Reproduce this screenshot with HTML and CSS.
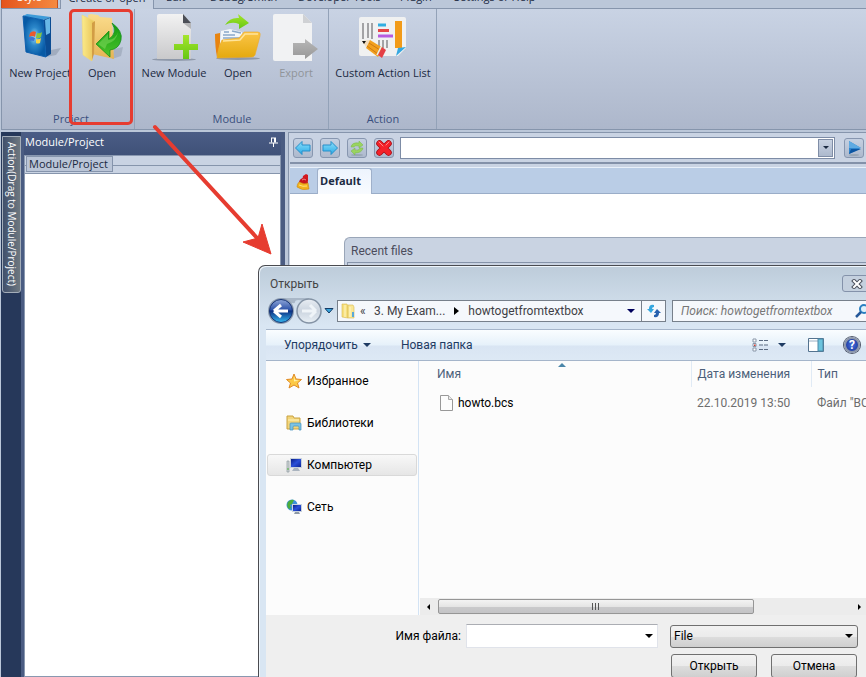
FILE: index.html
```html
<!DOCTYPE html>
<html lang="en">
<head>
<meta charset="utf-8">
<title>Module/Project</title>
<link rel="stylesheet" href="styles.css">
</head>
<body>
<svg class="defs" aria-hidden="true">
  <defs>
    <radialGradient id="boxBlue"><stop offset="0" stop-color="#9bdcf8"/><stop offset=".45" stop-color="#2b87ca"/><stop offset="1" stop-color="#075aa5"/></radialGradient>
    <linearGradient id="flap"><stop offset="0" stop-color="#fbeb8b"/><stop offset="1" stop-color="#e9c458"/></linearGradient>
    <linearGradient id="folderBack" x2="0" y2="1"><stop offset="0" stop-color="#fbdc8c"/><stop offset="1" stop-color="#e5b455"/></linearGradient>
    <linearGradient id="green" x2="0" y2="1"><stop offset="0" stop-color="#129a10"/><stop offset="1" stop-color="#4cc42c"/></linearGradient>
    <linearGradient id="lime" x2="0" y2="1"><stop offset="0" stop-color="#a6e52c"/><stop offset="1" stop-color="#65c713"/></linearGradient>
    <linearGradient id="page" x2="0" y2="1"><stop offset="0" stop-color="#f2f2f2"/><stop offset="1" stop-color="#c9c9cb"/></linearGradient>
    <linearGradient id="amber" x2="0" y2="1"><stop offset="0" stop-color="#fbc548"/><stop offset="1" stop-color="#e4a90e"/></linearGradient>
    <linearGradient id="grayArrow" x2="0" y2="1"><stop offset="0" stop-color="#b8b8b8"/><stop offset="1" stop-color="#979797"/></linearGradient>
    <linearGradient id="sky" x2="0" y2="1"><stop offset="0" stop-color="#8de0fb"/><stop offset="1" stop-color="#28a9e6"/></linearGradient>
    <linearGradient id="orb" x2="0" y2="1"><stop offset="0" stop-color="#8fa6d8"/><stop offset=".45" stop-color="#2c52a8"/><stop offset=".5" stop-color="#0b2f82"/><stop offset="1" stop-color="#36b8f0"/></linearGradient>
    <linearGradient id="orbOff" x2="0" y2="1"><stop offset="0" stop-color="#e8edf3"/><stop offset=".5" stop-color="#cbd4df"/><stop offset="1" stop-color="#e9f0f6"/></linearGradient>
    <linearGradient id="screen" x2="1" y2="1"><stop offset="0" stop-color="#0a1d86"/><stop offset=".5" stop-color="#2a50d8"/><stop offset="1" stop-color="#0c2496"/></linearGradient>
  </defs>
</svg>

<nav class="tabs">
  <a class="tab tab-style" href="#">Style</a>
  <a class="tab tab-active" href="#">Create or open</a>
  <a class="tab tab-edit" href="#">Edit</a>
  <a class="tab tab-debug" href="#">Debug/Smith</a>
  <a class="tab tab-dev" href="#">Developer Tools</a>
  <a class="tab tab-plugin" href="#">Plugin</a>
  <a class="tab tab-settings" href="#">Settings or Help</a>
</nav>

<header class="ribbon">
  <section class="group">
    <div class="tools">
      <button class="tool">
        <svg class="icon" viewBox="0 0 48 48"><path d="M30 44l10-2 5-7-10 2z" fill="#8d99ab" opacity=".6"/><path d="M7 3l4-2 24 3-8 3z" fill="#3e9bd8"/><path d="M27 7l8-3v37l-5 3z" fill="#0b4c93"/><path d="M29 7l5-2v15l-4 2z" fill="#68b7e6"/><path d="M7 3l20 4 3 37-20-5z" fill="url(#boxBlue)" stroke="#0e5fae"/><path d="M14 20q3-3 6-1l-1 5q-3-2-6 0z" fill="#ea5a2d"/><path d="M21 20q3 1 5-1l-1 5q-2 2-5 1z" fill="#86c540"/><path d="M13 25q3-2 6 0l-1 3q-3-1-5 0z" fill="#3f74d2"/><path d="M20 26q3 1 5-1l-1 5q-2 1-4 0z" fill="#f7d447"/></svg>
        <span>New Project</span>
      </button>
      <button class="tool">
        <svg class="icon" viewBox="0 0 48 48"><path d="M34 46l9-3 2-9-9 2z" fill="#8d99ab" opacity=".5"/><path d="M10 2l3-1 7 1 2 2 12 1 2 41-22-5z" fill="url(#folderBack)"/><path d="M4 2l12 6-2 40-9-6z" fill="url(#flap)" stroke="#f3d874" stroke-width=".6"/><path d="M14 10l3-2-1 33-2 6z" fill="#d29d45"/><path d="M18 31l13-13v8q9-6 3-16 11 8 9 17-2 9-11 10v7z" fill="url(#green)" stroke="#0c8a13" stroke-width=".7"/><path d="M20 31l10-10v6q8-1 10-8-1 9-11 12l-2 5z" fill="#86dc62" opacity=".5"/></svg>
        <span>Open</span>
      </button>
    </div>
    <h2>Project</h2>
  </section>
  <section class="group">
    <div class="tools">
      <button class="tool tool-wide">
        <svg class="icon" viewBox="0 0 48 48"><ellipse cx="24" cy="46.500" rx="22" ry="1.500" fill="#8e98a9"/><path d="M7 3q0-2 2-2h24l8 9v36H7z" fill="url(#page)"/><path d="M33 1l8 9h-8z" fill="#4b4e56"/><path d="M33 10h8v6z" fill="#b4b4b6"/><path d="M33 22h6v9h9v6h-9v9h-6v-9h-9v-6h9z" fill="url(#lime)"/></svg>
        <span>New Module</span>
      </button>
      <button class="tool tool-narrow">
        <svg class="icon" viewBox="0 0 48 48"><ellipse cx="24" cy="45.500" rx="22" ry="1.500" fill="#8e98a9"/><path d="M1 21l5-1v22l-3 2q-2-10-2-23z" fill="#e8840f"/><path d="M7 18l9-2 12 3 4 22H5z" fill="#f3f6fa"/><path d="M10 19h5M9 22h12M9 25h18M18 18l9 2" stroke="#8aa8ca" stroke-width="1.500"/><path d="M3 45q1-11 5-18l17-2 5-6h14q3 0 2 4l-5 19q-1 2-3 2z" fill="url(#amber)" stroke="#eca82a" stroke-width=".6"/><path d="M9 28l17-1 5-6h13" fill="none" stroke="#ffe49b" stroke-width="1.500"/><path d="M11 12Q16 4 25 5l-1-4 11 9-10 6v-5q-7-3-14 1z" fill="url(#lime)"/></svg>
        <span>Open</span>
      </button>
      <button class="tool tool-narrow" disabled>
        <svg class="icon" viewBox="0 0 48 48"><path d="M1 3q0-2 2-2h28l9 9v38H3q-2 0-2-2z" fill="#f1f2f3"/><path d="M31 1l9 9h-9z" fill="#cfd1d4"/><path d="M21 30h12v-4l13 10-13 10v-4H21z" fill="url(#grayArrow)"/></svg>
        <span>Export</span>
      </button>
    </div>
    <h2>Module</h2>
  </section>
  <section class="group">
    <div class="tools">
      <button class="tool tool-list">
        <svg class="icon" viewBox="0 0 48 48"><rect y="4" width="47" height="39" rx="2" fill="#f0f1f1"/><path d="M4 10v16M9 10v15M13 10v16M20 27v8M24 27v8M28 27v8" stroke="#a3a3a5" stroke-width="2"/><path d="M19 12h8" stroke="#32aee0" stroke-width="3"/><path d="M19 17.500h11" stroke="#e54545" stroke-width="3"/><path d="M19 23h15" stroke="#b65be0" stroke-width="3"/><path d="M36 8h7v27h-7z" fill="#f29b18"/><path d="M37 43l2-8 8-1z" fill="#35a8e1"/><path d="M39 43l8-8v8z" fill="#bec9da"/><path d="M3 28l8-1-4 7z" fill="#f3dcbb"/><path d="M3 28h4l-2 3z" fill="#111"/><path d="M11 27l13 8-5 9-12-9z" fill="#f2a01e"/><path d="M10 30l11 7M8 33l11 8" stroke="#ce7a15"/><path d="M23 34l4 3-4 8-4-3z" fill="#e43f46"/><path d="M22 34l-4 8" stroke="#e9edf0" stroke-width="1.500"/></svg>
        <span>Custom Action List</span>
      </button>
    </div>
    <h2>Action</h2>
  </section>
</header>

<main class="workspace">
  <aside class="rail"><button class="rail-tab">Action(Drag to Module/Project)</button></aside>
  <section class="panel">
    <h1 class="panel-title"><span>Module/Project</span>
      <svg class="pin" viewBox="0 0 9 10"><path d="M2 1h5M2.500 1v4.500M6.500 1v4.500M5.500 1v4.500M0 6h9M4.500 6v4" stroke="#fff" fill="none"/></svg>
    </h1>
    <div class="panel-body">
      <div class="panel-tabs"><button class="panel-tab">Module/Project</button></div>
      <div class="tree"></div>
    </div>
  </section>
  <section class="browser">
    <div class="navbar">
      <button class="square" aria-label="Back"><svg viewBox="0 0 18 18"><path d="M1.500 9L8 2.500V6h8v6H8v3.500z" fill="url(#sky)" stroke="#278fca"/></svg></button>
      <button class="square" aria-label="Forward"><svg viewBox="0 0 18 18"><path d="M16.500 9L10 2.500V6H2v6h8v3.500z" fill="url(#sky)" stroke="#278fca"/></svg></button>
      <button class="square" aria-label="Refresh"><svg viewBox="0 0 18 18"><ellipse cx="9" cy="16" rx="6" ry="1" fill="#98a6b5"/><path d="M3 8q1-5 8-4V2l4 4-4 3V7q-4-1-5 1zM15 9q-1 5-8 5v2l-4-4 4-3v2q4 1 5-2z" fill="#9ad45f" stroke="#74b64a" stroke-width=".5"/></svg></button>
      <button class="square" aria-label="Stop"><svg viewBox="0 0 18 18"><path d="M4.500 4.500l9 9m0-9l-9 9" stroke="#a80c14" stroke-width="6.500" stroke-linecap="round"/><path d="M4.500 4.500l9 9m0-9l-9 9" stroke="#f5222a" stroke-width="5" stroke-linecap="round"/><path d="M4 3l4 4M14 3l-3 3" stroke="#ff8a8a" stroke-linecap="round"/></svg></button>
      <div class="combo"><input aria-label="Address"><button class="combo-arrow" aria-label="Show addresses"><i class="caret"></i></button></div>
      <button class="square" aria-label="Go"><svg viewBox="0 0 18 18"><ellipse cx="9" cy="16" rx="5" ry="1" fill="#98a6b5"/><path d="M4 2l12 7-12 6z" fill="#2e86cf"/><path d="M4 2l12 7H4z" fill="#5eaae2"/><path d="M6 10h10l-12 5z" fill="#0c55a2"/></svg></button>
    </div>
    <div class="doc-tabs">
      <button class="broom" aria-label="Clear"><svg viewBox="0 0 14 16"><path d="M7 2l3-2 2 1v6H6z" fill="#d3181f"/><path d="M3 8q1-4 5-4 4 0 4 5l-3 2z" fill="#c8141c"/><path d="M6 6q2-2 4 0" stroke="#f58080" fill="none"/><path d="M3 8q5 3 9 1l1 6q-7 2-12-2 0-3 2-5z" fill="#f3b21c" stroke="#c9860f" stroke-width=".6"/><path d="M3 11q4 2 8 1" stroke="#ffe279" fill="none"/></svg></button>
      <button class="doc-tab">Default</button>
    </div>
    <div class="page"><section class="recent"><h2>Recent files</h2><div class="recent-list"></div></section></div>
  </section>
</main>

<div class="highlight"></div>
<svg class="arrow" viewBox="0 0 122 134" aria-hidden="true"><path d="M5 4l103 112" stroke="#e63c30" stroke-width="4" stroke-linecap="round"/><path d="M121 131l-28-12 15-4 4-14z" fill="#e63c30" stroke="#e63c30"/></svg>

<section class="dialog" role="dialog" aria-label="Открыть">
  <div class="titlebar"><h2>Открыть</h2>
    <button class="close" aria-label="Закрыть"><svg viewBox="0 0 12 10"><path d="M3 2l6 6m0-6L3 8" stroke="#4b505c" stroke-width="4" stroke-linecap="square"/><path d="M3 2l6 6m0-6L3 8" stroke="#fff" stroke-width="2" stroke-linecap="square"/></svg></button>
  </div>
  <div class="pathbar">
    <svg class="orbs" viewBox="0 0 56 28"><path d="M14 1h28v4q-14-4-14 0t-14-4z" fill="#a9b7c7"/><circle cx="14" cy="14" r="13" fill="#8d9cb0"/><circle cx="14" cy="14" r="11.500" fill="url(#orb)" stroke="#173474"/><path d="M7 14l7-6m-7 6l7 6M8 14h13" stroke="#fff" stroke-width="3"/><circle cx="42" cy="14" r="12" fill="url(#orbOff)" stroke="#8493a5" stroke-width="1.500"/><path d="M49 14l-6-6m6 6l-6 6m5-6H35" stroke="#eff4f8" stroke-width="3"/></svg>
    <button class="history" aria-label="Последние"><svg viewBox="0 0 10 6"><path d="M1 .5h8L5 5z" fill="#35a3dc" stroke="#163c68"/></svg></button>
    <div class="address">
      <svg class="folder" viewBox="0 0 14 16"><path d="M1 1h5l1 2v12l-6-1z" fill="#f6df7c" stroke="#d8b94e" stroke-width=".6"/><path d="M7 2h5l1 2v11H7z" fill="#f9e795" stroke="#d8b94e" stroke-width=".6"/><path d="M4 2v12M9 4v10" stroke="#fff7c9"/><path d="M12 9v5" stroke="#58a8d8" stroke-width="2"/></svg>
      <button class="crumb crumb-up">«</button><button class="crumb">3. My Exam...</button>
      <svg class="sep" viewBox="0 0 5 8"><path d="M0 0l5 4-5 4z"/></svg>
      <button class="crumb crumb-last">howtogetfromtextbox</button>
      <i class="caret caret-navy"></i>
      <button class="reload" aria-label="Обновить"><svg viewBox="0 0 14 14"><path d="M7 1Q2 0 2 5H0l4 4 3-4H5Q5 3 7 3z" fill="#35a7df"/><path d="M7 13q5 1 5-4h2l-4-4-3 4h2q0 2-2 2z" fill="#2660ae"/></svg></button>
    </div>
    <div class="search"><input aria-label="Поиск" placeholder="Поиск: howtogetfromtextbox"><svg viewBox="0 0 14 14"><circle cx="9" cy="5" r="4" fill="#dff1fb" stroke="#2a7fc1" stroke-width="2"/><path d="M6 8l-5 5" stroke="#26599a" stroke-width="2.500"/></svg></div>
  </div>
  <div class="commands">
    <button class="command">Упорядочить <i class="caret"></i></button>
    <button class="command">Новая папка</button>
    <span class="spacer"></span>
    <button class="view" aria-label="Вид"><svg viewBox="0 0 16 14"><path d="M1 1h3v3H1zM1 5.500h3v3H1zM1 10h3v3H1z" fill="#fff" stroke="#8896a8"/><path d="M7 2.500h4m1 0h4M7 7h4m1 0h4M7 11.500h4m1 0h4" stroke="#5b6a81"/><path d="M2 6.500h1.500v1.500H2z" fill="#d83d32"/></svg><i class="caret"></i></button>
    <button class="preview" aria-label="Область просмотра"><svg viewBox="0 0 16 14"><path d="M.5.500h15v13H.5z" fill="#fff" stroke="#54738f"/><path d="M1 3h14" stroke="#9ab0c4"/><path d="M10 1h5v12h-5z" fill="#6bc3dd" stroke="#4d8aa8"/></svg></button>
    <button class="help" aria-label="Справка">?</button>
  </div>
  <div class="explorer">
    <nav class="places">
      <a href="#"><svg viewBox="0 0 16 16"><path d="M8 1l2 5 5.500.5-4 3.500L13 15l-5-3-5 3 1.500-5-4-3.500L6 6z" fill="#fcc945" stroke="#e08a25"/><path d="M8 3l1 4 4 .5-5 1z" fill="#fff0a8"/></svg>Избранное</a>
      <a href="#"><svg viewBox="0 0 16 16"><path d="M1 3V1h6l1 2h6v11H1z" fill="#f2d57a" stroke="#c9a241"/><path d="M2 5h11" stroke="#fff3bd"/><path d="M4 14V9q0-1 1-1h9q1 0 1 1v6h-2v-3q0-1-1-1H8q-1 0-1 1v3H4z" fill="#7cc3e4" stroke="#4290bd" stroke-width=".7"/></svg>Библиотеки</a>
      <a href="#" class="current"><svg viewBox="0 0 16 16"><path d="M1 4h2v11H1z" fill="#cfd6d8" stroke="#8d989f" stroke-width=".7"/><path d="M1.500 11h1v2h-1z" fill="#4fb63f"/><path d="M4 1h12v10H4z" fill="#c9d2dc"/><path d="M5 2h10v8H5z" fill="url(#screen)"/><path d="M8 11h4l2 3H6z" fill="#aab4bf"/></svg>Компьютер</a>
      <a href="#"><svg viewBox="0 0 16 16"><circle cx="6" cy="6" r="5.500" fill="#3b91d8"/><path d="M2 3q3-3 6-2L6 5 4 6l1 3-2 1Q0 7 2 3z" fill="#4cad3a"/><path d="M6 5h10v8H6z" fill="#c9d2dc"/><path d="M7 6h8v6H7z" fill="url(#screen)"/><path d="M9 13h4l1 2H8z" fill="#8d99a6"/></svg>Сеть</a>
    </nav>
    <div class="files">
      <table>
        <colgroup><col class="c-name"><col class="c-date"><col></colgroup>
        <thead><tr><th>Имя<svg class="sort" viewBox="0 0 8 4"><path d="M0 4l4-4 4 4z" fill="#4b86a9"/></svg></th><th>Дата изменения</th><th>Тип</th></tr></thead>
        <tbody><tr><td><svg class="doc" viewBox="0 0 13 16"><path d="M.5.500h8l4 4v11H.5z" fill="#fcfcfc" stroke="#989898"/><path d="M8.500.500v4h4" fill="#e9e9e9" stroke="#a8a8a8"/></svg>howto.bcs</td><td>22.10.2019 13:50</td><td>Файл "BCS"</td></tr></tbody>
      </table>
      <div class="scroll"><svg viewBox="0 0 5 8"><path d="M4 1L1 4l3 3z"/></svg><div class="thumb"><i></i><i></i><i></i></div><svg class="scroll-right" viewBox="0 0 5 8"><path d="M1 1l3 3-3 3z"/></svg></div>
    </div>
  </div>
  <form class="footer">
    <label for="name">Имя файла:</label>
    <div class="name-box"><input id="name"><i class="caret caret-big"></i></div>
    <div class="type-box"><select aria-label="Тип файла"><option>File</option></select><i class="caret caret-big"></i></div>
    <div class="actions"><button type="button">Открыть</button><button type="button">Отмена</button></div>
  </form>
</section>
</body>
</html>
```
FILE: styles.css
```css
* { box-sizing: border-box; }

body {
  margin: 0;
  height: 100vh;
  overflow: hidden;
  display: flex;
  flex-direction: column;
  position: relative;
  padding-left: 1px;
  background: #bbc7d9;
  color: #1b2a42;
  font: 11px/16px "Open Sans", "Noto Sans", sans-serif;
}

button, input, select { font: inherit; color: inherit; margin: 0; padding: 0; border: 0; background: none; border-radius: 0; }
input { min-width: 0; outline: 0; }
h1, h2 { margin: 0; font: inherit; }
a { color: inherit; text-decoration: none; }
svg { display: block; flex: none; }
.defs { position: absolute; width: 0; height: 0; }

.caret { width: 0; height: 0; border: 4px solid transparent; border-top-color: currentColor; border-bottom: 0; flex: none; }
.caret-navy { color: #00005c; }
.caret-big { color: #000; }

/* Menu tabs */
.tabs { display: flex; align-items: flex-end; height: 9px; flex: none; gap: 24px; border-bottom: 1px solid #8695ac; }
.tab { display: flex; align-items: flex-end; height: 24px; flex: none; padding-bottom: 3px; white-space: nowrap; }
.tab-style { width: 57px; margin-right: -24px; justify-content: center; color: #fff; background: linear-gradient(90deg, #e4541c, #f58a41); border: solid #c44f1e; border-width: 0 1px; }
.tab-active { width: 94px; justify-content: center; margin: 0 -12px -1px 2px; border: solid #8695ac; border-width: 0 1px; background: #c8d2e2; }
.tab-edit { width: 20px; }
.tab-debug { width: 64px; }
.tab-dev { width: 78px; }
.tab-plugin { width: 30px; }

/* Ribbon */
.ribbon { display: flex; height: 121px; flex: none; background: linear-gradient(#c9d3e4, #adb7cb); border: solid #8695ac; border-width: 0 0 1px 1px; }
.group { display: flex; flex-direction: column; justify-content: space-between; align-items: center; padding: 4px 3px 2px 4px; border-right: 1px solid #93a2b8; }
.group:first-child { padding-left: 7px; padding-right: 1px; }
.group h2 { color: #3a4f7d; }
.tools { display: flex; }
.tool { display: flex; flex-direction: column; align-items: center; gap: 4px; width: 62px; white-space: nowrap; }
.tool:disabled { color: #909499; }
.tool-wide { width: 70px; }
.tool-narrow { width: 58px; }
.tool-list { width: 100px; }
.icon { width: 48px; height: 48px; }

/* Workspace */
.workspace { display: flex; flex: 1; min-height: 0; padding-top: 2px; }
.rail { width: 20px; flex: none; padding: 4px 0 0 1px; background: #26385a; }
.rail-tab { width: 19px; height: 157px; writing-mode: vertical-rl; color: #fff; font-size: 10px; line-height: 16px; white-space: nowrap; background: linear-gradient(90deg, #40506c, #6e7880); border: 1px solid #a3adb9; border-radius: 0 0 3px 3px; }
.panel { display: flex; flex-direction: column; flex: none; width: 264px; padding: 0 4px 0 3px; background: #4a5c82; }
.panel-title { display: flex; justify-content: space-between; height: 23px; padding: 2px 3px 0 1px; color: #fff; background: linear-gradient(#4b5d86, #3f5178); }
.pin { width: 9px; height: 10px; margin-top: 3px; }
.panel-body { display: flex; flex-direction: column; flex: 1; border: 1px solid #8998b0; }
.panel-tabs { height: 18px; padding: 0 0 0 1px; background: linear-gradient(#c9d3e3 9px, #8695ac 9px, #8695ac 10px, #c9d3e3 10px); border-bottom: 1px solid #8695ac; }
.panel-tab { display: block; height: 16px; padding: 0 4px 0 2px; line-height: 14px; background: #bac5d7; border: 1px solid #8594ac; }
.tree { flex: 1; background: #fff; }
.browser { display: flex; flex-direction: column; flex: 1; min-width: 0; margin-left: 3px; padding-left: 1px; background: #c9d3e3; border: solid #8695ac; border-width: 1px 0 0 1px; }

.navbar { display: flex; align-items: center; gap: 7px; height: 31px; flex: none; padding: 0 2px 0 3px; border-bottom: 2px solid #8391a9; }
.square { width: 20px; height: 20px; flex: none; background: linear-gradient(#c5d0e1, #adb9cd); border: 1px solid #8796af; border-radius: 3px; }
.square svg { width: 18px; height: 18px; }
.combo { display: flex; flex: 1; height: 22px; margin: 0 2px 0 -1px; padding: 1px; background: #fff; border: 1px solid #7d8ca6; }
.combo input { flex: 1; }
.combo-arrow { display: flex; align-items: center; justify-content: center; width: 15px; background: linear-gradient(#c8d2e2, #adb9cd); border: 1px solid #7f8da6; }
.combo-arrow .caret { border-width: 3px 3px 0; }

.doc-tabs { display: flex; height: 27px; flex: none; margin-top: 3px; background: #bacde6; border: solid #e8f0fa; border-width: 1px 0 0; border-bottom: 1px solid #9aadc8; }
.broom { width: 27px; padding: 2px 0 0 6px; }
.broom svg { width: 14px; height: 16px; }
.doc-tab { height: 26px; width: 55px; padding: 0 8px 2px 0; font-weight: bold; background: linear-gradient(#edf4fd, #f8fbff); border: 1px solid #9fb0ca; border-bottom: 0; border-radius: 3px 3px 0 0; }
.page { flex: 1; padding: 43px 0 0 54px; background: #fff; }
.recent { height: 100%; padding: 4px 0 0 2px; background: #c9d3e2; border: solid #9aa6b8; border-width: 1px 0 0 1px; border-radius: 6px 0 0 0; color: #4b4c5c; font: 12px/16px Roboto, sans-serif; }
.recent h2 { padding: 1px 0 3px 4px; }
.recent-list { height: 40px; border: solid #8593a9; border-width: 1px 0 0 1px; }

/* Annotation */
.highlight { position: absolute; left: 69px; top: 9px; width: 64px; height: 116px; border: 3px solid #e63c30; border-radius: 5px; }
.arrow { position: absolute; left: 150px; top: 123px; width: 122px; height: 134px; }

/* File dialog: runs past the right edge of the window */
.dialog { position: absolute; left: 258px; right: -18px; top: 265px; bottom: 0; display: flex; flex-direction: column; padding: 0 7px; background: linear-gradient(#bdccda, #d9e6f3 60px); border: 1px solid #4a4b50; border-bottom: 0; border-radius: 7px 7px 0 0; box-shadow: inset 1px 1px #eef5fb; color: #1e1e1e; font: 12px/16px Roboto, "Noto Sans", sans-serif; }
.titlebar { display: flex; align-items: center; justify-content: space-between; height: 31px; flex: none; padding: 4px 0 0 4px; color: #444; }
.close { display: grid; place-items: center; width: 34px; height: 17px; border: 1px solid #8492aa; border-radius: 3px; background: #c4d0de; padding-right: 4px; }
.close svg { width: 12px; height: 10px; }
.pathbar { display: flex; align-items: center; height: 32px; flex: none; padding: 0 0 4px 1px; color: #3f3f46; }
.orbs { width: 56px; height: 28px; }
.history { width: 16px; }
.history svg { width: 10px; height: 6px; margin-left: 1px; }
.address { display: flex; align-items: center; width: 329px; height: 22px; flex: none; margin-left: -2px; padding-left: 3px; background: #f5f8fc; border: 1px solid #77808b; }
.folder { width: 14px; height: 16px; margin-right: 5px; }
.crumb-up { width: 14px; }
.sep { width: 5px; height: 8px; margin: 0 9px; }
.crumb { white-space: nowrap; text-align: left; }
.crumb-last { flex: 1; }
.reload { display: grid; place-items: center; align-self: stretch; width: 24px; margin-left: 6px; border-left: 1px solid #77808b; }
.reload svg { width: 14px; height: 14px; }
.search { display: flex; align-items: center; flex: 1; height: 22px; margin-left: 6px; padding: 0 6px 0 8px; background: #f5f8fc; border: 1px solid #77808b; }
.search input { flex: 1; font-style: italic; }
.search input::placeholder { color: #777; opacity: 1; }
.search svg { width: 14px; height: 14px; }

.commands { display: flex; align-items: center; height: 32px; flex: none; padding: 0 16px 0 18px; color: #1e3b63; background: linear-gradient(#fafdff, #e6f1fa 15px, #d9e5f3 16px, #dde9f5); border: solid #a5b5ca; border-width: 1px 0; }
.command { display: flex; align-items: center; gap: 5px; margin-right: 30px; }
.spacer { flex: 1; }
.view { display: flex; align-items: center; gap: 10px; margin-right: 22px; }
.view svg, .preview svg { width: 16px; height: 14px; }
.help { width: 16px; height: 16px; margin-left: 20px; line-height: 12px; font-weight: bold; color: #fff; background: radial-gradient(#456fe0, #17308f); border: 2px solid #8b96ab; border-radius: 8px; box-shadow: 0 0 0 1px #50586a; }

.explorer { display: flex; flex: 1; min-height: 0; background: #fcfcfc; }
.places { display: flex; flex-direction: column; gap: 20px; width: 153px; flex: none; padding: 9px 1px; border-right: 1px solid #d3e3f4; color: #000; }
.places a { display: flex; align-items: center; gap: 5px; height: 22px; padding-left: 18px; border: 1px solid transparent; border-radius: 3px; }
.places a.current { background: linear-gradient(#f8f8f8, #e6e6e6); border-color: #d9d9d9; }
.places svg { width: 16px; height: 16px; }
.files { display: flex; flex-direction: column; justify-content: space-between; flex: 1; min-width: 0; padding-left: 1px; }
table { width: 100%; table-layout: fixed; border-collapse: collapse; color: #6d6d6d; }
.c-name { width: 271px; }
.c-date { width: 120px; }
th, td { padding: 0 0 0 6px; text-align: left; font-weight: normal; white-space: nowrap; overflow: hidden; }
th { height: 26px; color: #4c607a; border-right: 1px solid #e0eaf5; position: relative; }
th:first-child { padding-left: 17px; }
.sort { position: absolute; left: 51%; top: 2px; width: 8px; height: 4px; }
td { height: 31px; }
td:first-child { display: flex; align-items: center; gap: 5px; padding-left: 20px; color: #000; }
.doc { width: 13px; height: 16px; }
.scroll { display: flex; align-items: center; height: 17px; padding: 0 14px 0 6px; background: #ececec; }
.scroll > svg { width: 5px; height: 8px; }
.thumb { display: flex; align-items: center; justify-content: center; gap: 1px; width: 316px; height: 15px; margin-left: 7px; background: linear-gradient(#f3f3f3, #e5e5e5 50%, #c9c9cb 55%, #c4c4c6); border: 1px solid #969696; border-radius: 2px; }
.thumb i { width: 2px; height: 7px; border-left: 1px solid #555; }
.scroll > .scroll-right { margin-left: auto; }

.footer { display: grid; grid-template-columns: 195px 192px 1fr; align-content: start; align-items: center; row-gap: 6px; height: 62px; flex: none; padding: 9px 18px 0 0; background: #efefef; color: #000; }
.footer label { text-align: right; }
.name-box { display: flex; align-items: center; height: 24px; margin-left: 5px; margin-right: -5px; padding-right: 4px; background: #fff; border: 1px solid #e0e3ea; border-top-color: #abadb3; }
.name-box input { flex: 1; }
.type-box { display: flex; align-items: center; height: 23px; margin-left: 17px; background: linear-gradient(#f2f2f2, #ebebeb 50%, #dddddd 51%, #cfcfcf); border: 1px solid #707070; border-radius: 3px; }
.type-box select { appearance: none; flex: 1; padding-left: 3px; outline: 0; }
.type-box .caret { margin-right: 4px; }
.actions { grid-column: 3; display: grid; grid-template-columns: 1fr 1fr; gap: 14px; margin: 0 1px 0 18px; }
.actions button { height: 24px; background: linear-gradient(#f2f2f2, #ebebeb 50%, #dddddd 51%, #cfcfcf); border: 1px solid #707070; border-radius: 3px; }
```
